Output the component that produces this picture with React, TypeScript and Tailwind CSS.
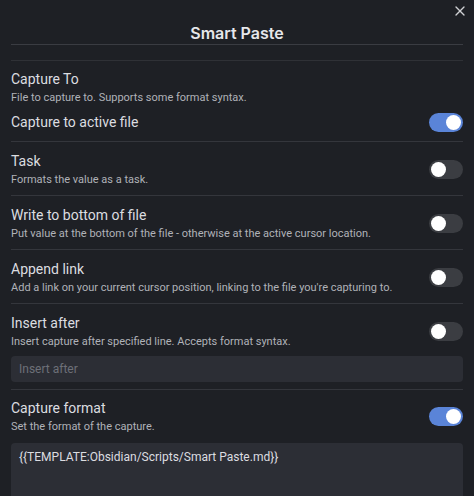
import { X } from "lucide-react";

const Toggle = ({ on }: { on: boolean }) => (
  <div
    className={`flex h-[19px] w-[34px] shrink-0 items-center rounded-full px-[2px] ${
      on ? "justify-end bg-[#5a84d8]" : "justify-start bg-[#3b3d42]"
    }`}
  >
    <div className="h-[15px] w-[15px] rounded-full bg-white" />
  </div>
);

const Item = ({
  name,
  desc,
  on,
}: {
  name: string;
  desc: string;
  on?: boolean;
}) => (
  <div className="flex items-center justify-between border-t border-[#34363c] pb-[7px] pt-[9px]">
    <div className="flex flex-col">
      <span className="text-[14px] leading-[20px] text-[#dcdde0]">{name}</span>
      <span className="text-[11px] leading-[17px] text-[#b0b2b8]">{desc}</span>
    </div>
    {on !== undefined && <Toggle on={on} />}
  </div>
);

export default function App() {
  return (
    <div
      className="relative h-[496px] w-[474px] overflow-hidden bg-[#1e2025] pl-[11px] pr-[11px]"
      style={{ fontFamily: "Roboto, 'Noto Sans', sans-serif" }}
    >
      <X
        className="absolute right-[6px] top-[3px] text-[#d0d1d4]"
        size={16}
        strokeWidth={2}
      />
      <div className="flex h-[45px] justify-center border-b border-[#3a3c42] pt-[21px]">
        <span
          className="text-[16px] font-semibold leading-[24px] text-[#e6e7ea]"
          style={{ fontFamily: "Inter, sans-serif" }}
        >
          Smart Paste
        </span>
      </div>
      <div className="h-[15px]" />
      <div className="border-t border-[#2f3136] pt-[8px]">
        <div className="flex flex-col">
          <span className="text-[14px] leading-[20px] text-[#dcdde0]">Capture To</span>
          <span className="text-[11px] leading-[17px] text-[#b0b2b8]">
            File to capture to. Supports some format syntax.
          </span>
        </div>
        <div className="flex items-center justify-between pb-[7px] pt-[4px]">
          <span className="text-[14px] leading-[24px] text-[#dcdde0]">
            Capture to active file
          </span>
          <Toggle on />
        </div>
      </div>
      <Item name="Task" desc="Formats the value as a task." on={false} />
      <Item
        name="Write to bottom of file"
        desc="Put value at the bottom of the file - otherwise at the active cursor location."
        on={false}
      />
      <Item
        name="Append link"
        desc="Add a link on your current cursor position, linking to the file you're capturing to."
        on={false}
      />
      <div className="border-t border-[#34363c] pb-[7px] pt-[9px]">
        <div className="flex items-center justify-between">
          <div className="flex flex-col">
            <span className="text-[14px] leading-[20px] text-[#dcdde0]">Insert after</span>
            <span className="text-[11px] leading-[17px] text-[#b0b2b8]">
              Insert capture after specified line. Accepts format syntax.
            </span>
          </div>
          <Toggle on={false} />
        </div>
        <div className="mt-[6px] flex h-[26px] items-center rounded-[4px] bg-[#2c2e35] px-[8px] text-[12px] text-[#6d7078]">
          Insert after
        </div>
      </div>
      <div className="border-t border-[#34363c] pt-[8px]">
        <div className="flex items-center justify-between">
          <div className="flex flex-col">
            <span className="text-[14px] leading-[20px] text-[#dcdde0]">Capture format</span>
            <span className="text-[11px] leading-[17px] text-[#b0b2b8]">
              Set the format of the capture.
            </span>
          </div>
          <Toggle on />
        </div>
        <div className="mt-[8px] h-[80px] rounded-[4px] bg-[#2c2e35] px-[8px] pt-[5px] text-[12px] leading-[18px] text-[#dcdde0]">
          {"{{TEMPLATE:Obsidian/Scripts/Smart Paste.md}}"}
        </div>
      </div>
    </div>
  );
}
